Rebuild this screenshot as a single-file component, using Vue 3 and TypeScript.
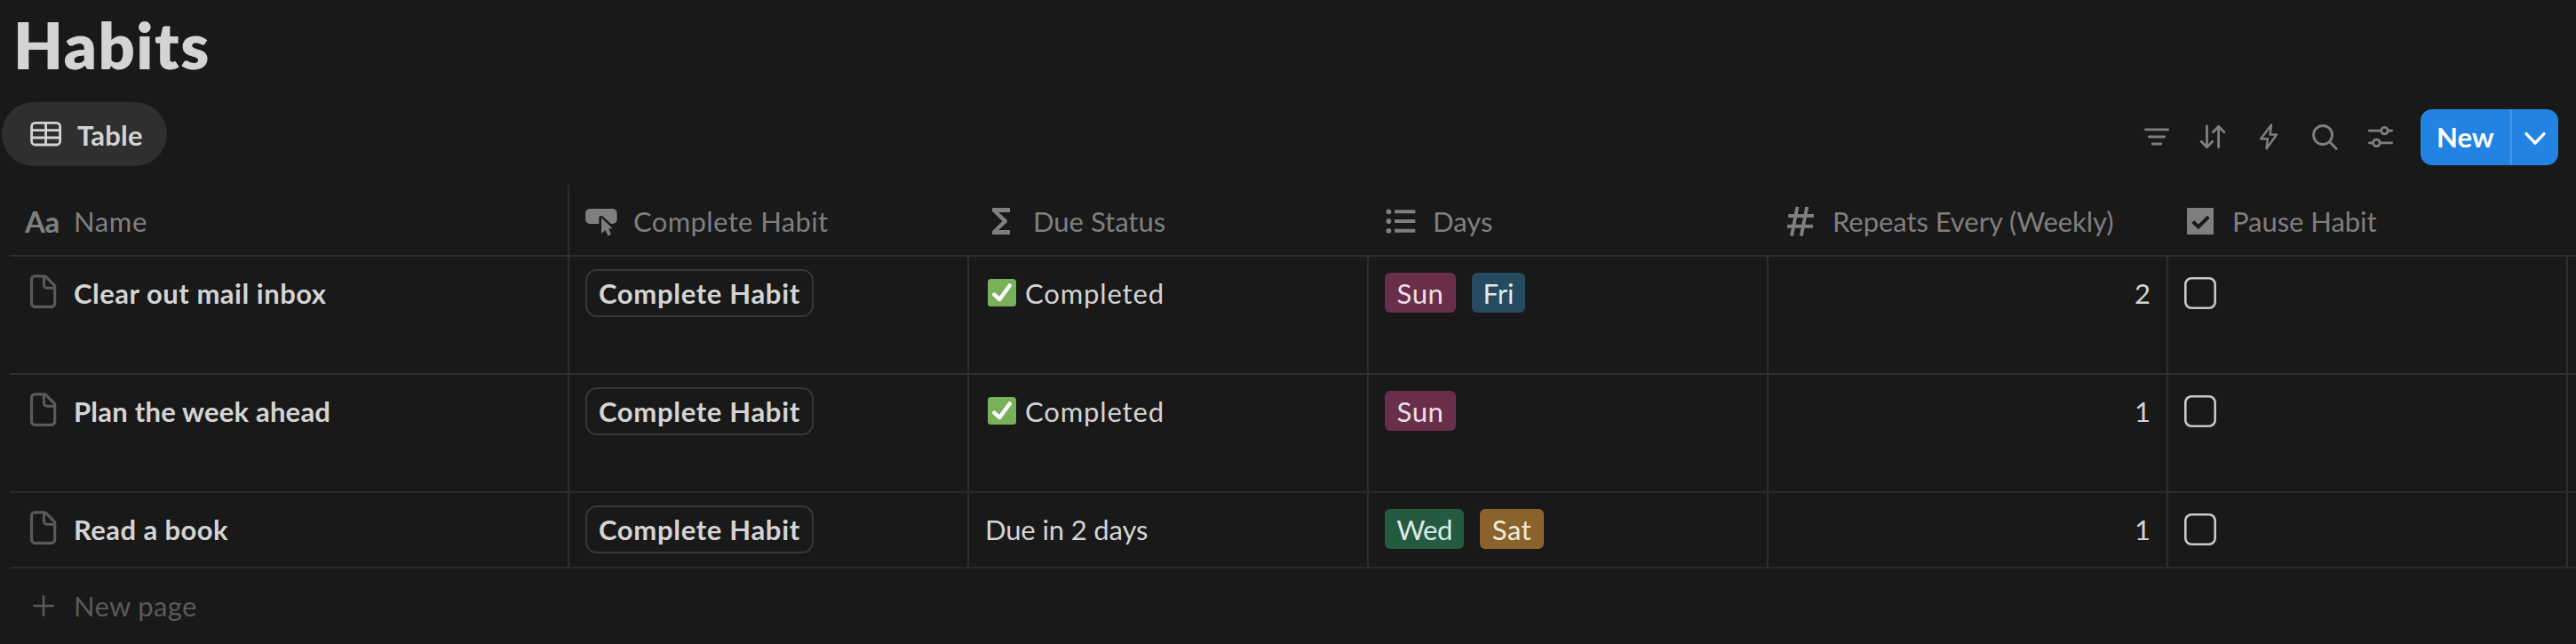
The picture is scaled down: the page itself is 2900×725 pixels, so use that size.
<script setup lang="ts">
interface Column { key: string; label: string }
interface Tag { label: string; tone: string }
interface Habit {
  id: string
  name: string
  done: boolean
  status: string
  days: Tag[]
  repeats: number
}

const columns: Column[] = [
  { key: 'name', label: 'Name' },
  { key: 'action', label: 'Complete Habit' },
  { key: 'status', label: 'Due Status' },
  { key: 'days', label: 'Days' },
  { key: 'repeats', label: 'Repeats Every (Weekly)' },
  { key: 'pause', label: 'Pause Habit' },
]

const habits: Habit[] = [
  {
    id: 'mail', name: 'Clear out mail inbox', done: true, status: 'Completed',
    days: [{ label: 'Sun', tone: 'sun' }, { label: 'Fri', tone: 'fri' }], repeats: 2,
  },
  {
    id: 'plan', name: 'Plan the week ahead', done: true, status: 'Completed',
    days: [{ label: 'Sun', tone: 'sun' }], repeats: 1,
  },
  {
    id: 'read', name: 'Read a book', done: false, status: 'Due in 2 days',
    days: [{ label: 'Wed', tone: 'wed' }, { label: 'Sat', tone: 'sat' }], repeats: 1,
  },
]
</script>

<template>
  <main class="page">
    <h1 class="title">Habits</h1>

    <div class="toolbar">
      <button class="tab">
        <svg class="tab-icon" width="36" height="28" viewBox="0 0 36 28">
          <g fill="none" stroke="currentColor" stroke-width="2.8">
            <rect x="1.6" y="1.4" width="32" height="24.6" rx="4" />
            <path d="M1.6 9.7h32M1.6 18h32M17.6 1.4v24.6" />
          </g>
        </svg>
        <span>Table</span>
      </button>

      <div class="actions">
        <span class="tool">
          <svg viewBox="0 0 36 36"><path d="M5.3 9.8h25.4M9.3 18h17.4M13.2 26h9.6" /></svg>
        </span>
        <span class="tool">
          <svg viewBox="0 0 36 36"><path d="M11.5 6v23.5M5.2 23.3l6.3 6.4 6.3-6.4M24.6 29.8V6.3M18.4 12.7l6.2-6.4 6.3 6.4" /></svg>
        </span>
        <span class="tool">
          <svg viewBox="0 0 36 36"><path stroke-width="2.5" d="M21 4.6 9.2 20.3h7.6L15.6 31.2 27 15.6h-7.4z" /></svg>
        </span>
        <span class="tool">
          <svg viewBox="0 0 36 36"><circle cx="16" cy="16" r="10.5" /><path d="m23.7 23.7 7.5 7.8" /></svg>
        </span>
        <span class="tool">
          <svg viewBox="0 0 36 36">
            <path d="M5.3 11.1h13.2M26.3 11.1h4.4M5.3 24.8h4.2M17.3 24.8h13.4" />
            <circle cx="22.4" cy="11.1" r="3.8" /><circle cx="13.4" cy="24.8" r="3.8" />
          </svg>
        </span>
        <div class="new">
          <span class="new-label">New</span>
          <span class="new-more">
            <svg width="24" height="16" viewBox="0 0 24 16">
              <path d="M2 2.6 12 13 22 2.6" fill="none" stroke="#fff" stroke-width="3.3" stroke-linecap="round" stroke-linejoin="miter" />
            </svg>
          </span>
        </div>
      </div>
    </div>

    <section class="table">
      <div class="row head">
        <div v-for="c in columns" :key="c.key" class="cell head-cell" :class="`col-${c.key}`">
          <span v-if="c.key === 'name'" class="glyph aa">Aa</span>
          <svg v-else class="glyph" viewBox="0 0 36 36" fill="currentColor">
            <template v-if="c.key === 'action'">
              <rect x="0" y="4" width="35.6" height="17" rx="5" />
              <path
                d="M18 14.8 30.4 26h-4l2.5 7.2-3.4 1.4-3-6.6-4.5 3.4z"
                stroke="#191919" stroke-width="5.4" stroke-linejoin="round"
              />
              <path d="M18 14.2 30.6 26.2l-4.4.3 2.7 6.6-3.4 1.5-2.9-6.6-4.6 3.8z" />
            </template>
            <path
              v-else-if="c.key === 'status'"
              d="M8 3h20v5H15.2l9.4 8.6v2.8L15.2 28H28v5H8v-3.7L19.4 18 8 6.7z"
            />
            <template v-else-if="c.key === 'days'">
              <circle cx="4.4" cy="7.3" r="2.9" /><circle cx="4.4" cy="18" r="2.9" /><circle cx="4.4" cy="28.8" r="2.9" />
              <path d="M11 5.3h23.3v4H11zM11 16h23.3v4H11zM11 26.8h23.3v4H11z" />
            </template>
            <path
              v-else-if="c.key === 'repeats'"
              d="M14.4 1.8 8 34.6M25.2 1.8 18.8 34.6M4.2 12H33M3 23.7h29"
              fill="none" stroke="currentColor" stroke-width="3.9"
            />
            <template v-else>
              <rect x="3" y="3" width="30" height="30" rx="0.6" />
              <path d="m9.7 18.5 6.2 6L27.2 13.2" fill="none" stroke="#191919" stroke-width="4" />
            </template>
          </svg>
          <span class="label">{{ c.label }}</span>
        </div>
      </div>

      <div v-for="h in habits" :key="h.id" class="row habit" :class="h.id">
        <div class="cell name">
          <svg class="doc" width="36" height="38" viewBox="0 0 36 38">
            <g fill="none" stroke="currentColor" stroke-width="3.2" stroke-linejoin="round">
              <path d="M10.2 1.8h10.6c.8 0 1.3.2 1.9.8l9.2 9.2c.6.6.8 1.1.8 1.9v18.9a3.7 3.7 0 0 1-3.7 3.7H10.2a3.7 3.7 0 0 1-3.7-3.7V5.5a3.7 3.7 0 0 1 3.7-3.7z" />
              <path d="M20.4 2.4v9.6a3.2 3.2 0 0 0 3.2 3.2h9" stroke-width="3" />
            </g>
          </svg>
          <span class="habit-name">{{ h.name }}</span>
        </div>
        <div class="cell"><button class="complete">Complete Habit</button></div>
        <div class="cell status" :class="{ done: h.done }">
          <svg v-if="h.done" class="tick" width="32" height="31" viewBox="0 0 32 31">
            <rect width="32" height="31" rx="3.5" fill="#78b159" />
            <path d="m7.2 17.6 6.1 5.4L24.8 7.4" fill="none" stroke="#fff" stroke-width="4.4" stroke-linecap="round" stroke-linejoin="round" />
          </svg>
          <span>{{ h.status }}</span>
        </div>
        <div class="cell tags">
          <span v-for="d in h.days" :key="d.label" class="tag" :class="d.tone">{{ d.label }}</span>
        </div>
        <div class="cell number">{{ h.repeats }}</div>
        <div class="cell">
          <svg class="checkbox" width="36" height="36" viewBox="0 0 36 36" role="checkbox" aria-checked="false">
            <rect x="1.3" y="1.3" width="33.4" height="33.4" rx="6.8" fill="none" stroke="#c8c8c8" stroke-width="2.6" />
          </svg>
        </div>
      </div>

      <div class="new-page">
        <svg width="24" height="24" viewBox="0 0 24 24">
          <path d="M12 1.4v21.2M1.4 12h21.2" stroke="currentColor" stroke-width="2.7" stroke-linecap="round" />
        </svg>
        <span>New page</span>
      </div>
    </section>
  </main>
</template>

<style>
body { margin: 0; background: #191919; }
</style>

<style scoped>
.page {
  box-sizing: border-box;
  width: 2900px;
  height: 725px;
  overflow: hidden;
  background: #191919;
  color: #d4d4d4;
  font: 400 31px/46px Lato, "Open Sans", sans-serif;
  white-space: nowrap;
}
button { font: inherit; color: inherit; margin: 0; }
.title {
  box-sizing: border-box;
  height: 115px;
  margin: 0;
  padding: 7px 0 0 15px;
  font-size: 72px;
  line-height: 86px;
  font-weight: 800;
  letter-spacing: 1.5px;
}
.toolbar {
  display: flex;
  justify-content: space-between;
  align-items: flex-start;
  height: 93px;
  padding: 0 20px 0 2px;
}
.tab {
  display: flex;
  align-items: center;
  box-sizing: border-box;
  width: 186px;
  height: 72px;
  padding: 0 0 0 32px;
  gap: 17px;
  border: 0;
  border-radius: 36px;
  background: #2f2f2f;
  font-weight: 700;
  letter-spacing: 0.2px;
}
.tab span { padding-top: 2px; }
.actions { display: flex; align-items: center; margin-top: 8px; height: 63px; color: #7f7f7f; }
.tool { display: flex; justify-content: center; width: 63px; padding-bottom: 1px; }
.tool svg {
  width: 36px;
  height: 36px;
  fill: none;
  stroke: currentColor;
  stroke-width: 2.8;
  stroke-linecap: round;
  stroke-linejoin: round;
}
.new {
  display: flex;
  width: 155px;
  height: 63px;
  margin-left: 14px;
  border-radius: 13px;
  background: #2383e2;
  color: #fff;
  font-weight: 700;
  line-height: 62px;
}
.new-label { box-sizing: border-box; width: 101px; padding-left: 18px; }
.new-more {
  display: flex;
  flex: 1;
  align-items: center;
  justify-content: center;
  padding: 3px 1px 0 0;
  box-sizing: border-box;
  border-left: 2px solid #4695e6;
}

.table { padding-left: 11px; }
.row {
  display: grid;
  grid-template-columns: 630px repeat(5, 450px) 1fr;
  border-bottom: 2px solid #2e2e2e;
}
.cell {
  display: flex;
  align-items: flex-start;
  padding: 18px 18px 0;
  border-right: 2px solid #2e2e2e;
}
.head { height: 79px; color: #7f7f7f; }
.head-cell { align-items: center; gap: 18px; padding-top: 3px; border-right-color: transparent; }
.col-name { border-right-color: #2e2e2e; }
.glyph { flex: none; width: 36px; height: 36px; }
.aa { margin-left: -1px; padding-right: 1px; font-size: 33px; line-height: 36px; font-weight: 700; letter-spacing: -0.5px; }
.col-name .label { letter-spacing: 0.6px; }
.col-action .label { letter-spacing: 0.38px; }
.col-repeats .label { letter-spacing: -0.06px; }
.col-pause .label { letter-spacing: -0.05px; }

.habit { height: 131px; }
.habit.read { height: 83px; }
.plan, .read { border-bottom-color: #292929; }
.name { gap: 18px; font-weight: 700; }
.doc { flex: none; margin-top: 2px; color: #5a5a5a; }
.mail .habit-name { letter-spacing: 0.51px; }
.plan .habit-name { letter-spacing: 0.22px; }
.read .habit-name { letter-spacing: 0.42px; }
.complete {
  box-sizing: border-box;
  width: 257px;
  height: 54px;
  margin-top: -4px;
  padding: 0 0 0 13px;
  border: 2px solid #383838;
  border-radius: 13px;
  background: transparent;
  font-weight: 700;
  line-height: 50px;
  letter-spacing: 0.68px;
  text-align: left;
}
.status { letter-spacing: -0.13px; }
.status.done { gap: 10px; letter-spacing: 0.85px; }
.tick { flex: none; margin: 7px 0 0 3px; }
.tags { gap: 18px; }
.tag {
  height: 45px;
  border-radius: 6px;
  line-height: 46px;
  text-align: center;
}
.sun { width: 80px; background: #692e4a; color: #ecdfe6; letter-spacing: 0.6px; }
.fri { width: 60px; background: #264a60; color: #dde8ea; }
.wed { width: 89px; background: #245a40; color: #dfe9e3; letter-spacing: -0.5px; }
.sat { width: 72px; background: #89632b; color: #f2ebdf; letter-spacing: 0.5px; }
.number { justify-content: flex-end; }
.checkbox { flex: none; margin-top: 5px; }
.new-page {
  display: flex;
  align-items: center;
  height: 84px;
  padding-left: 26px;
  gap: 22px;
  color: #5a5a5a;
  letter-spacing: 0.31px;
}
</style>
